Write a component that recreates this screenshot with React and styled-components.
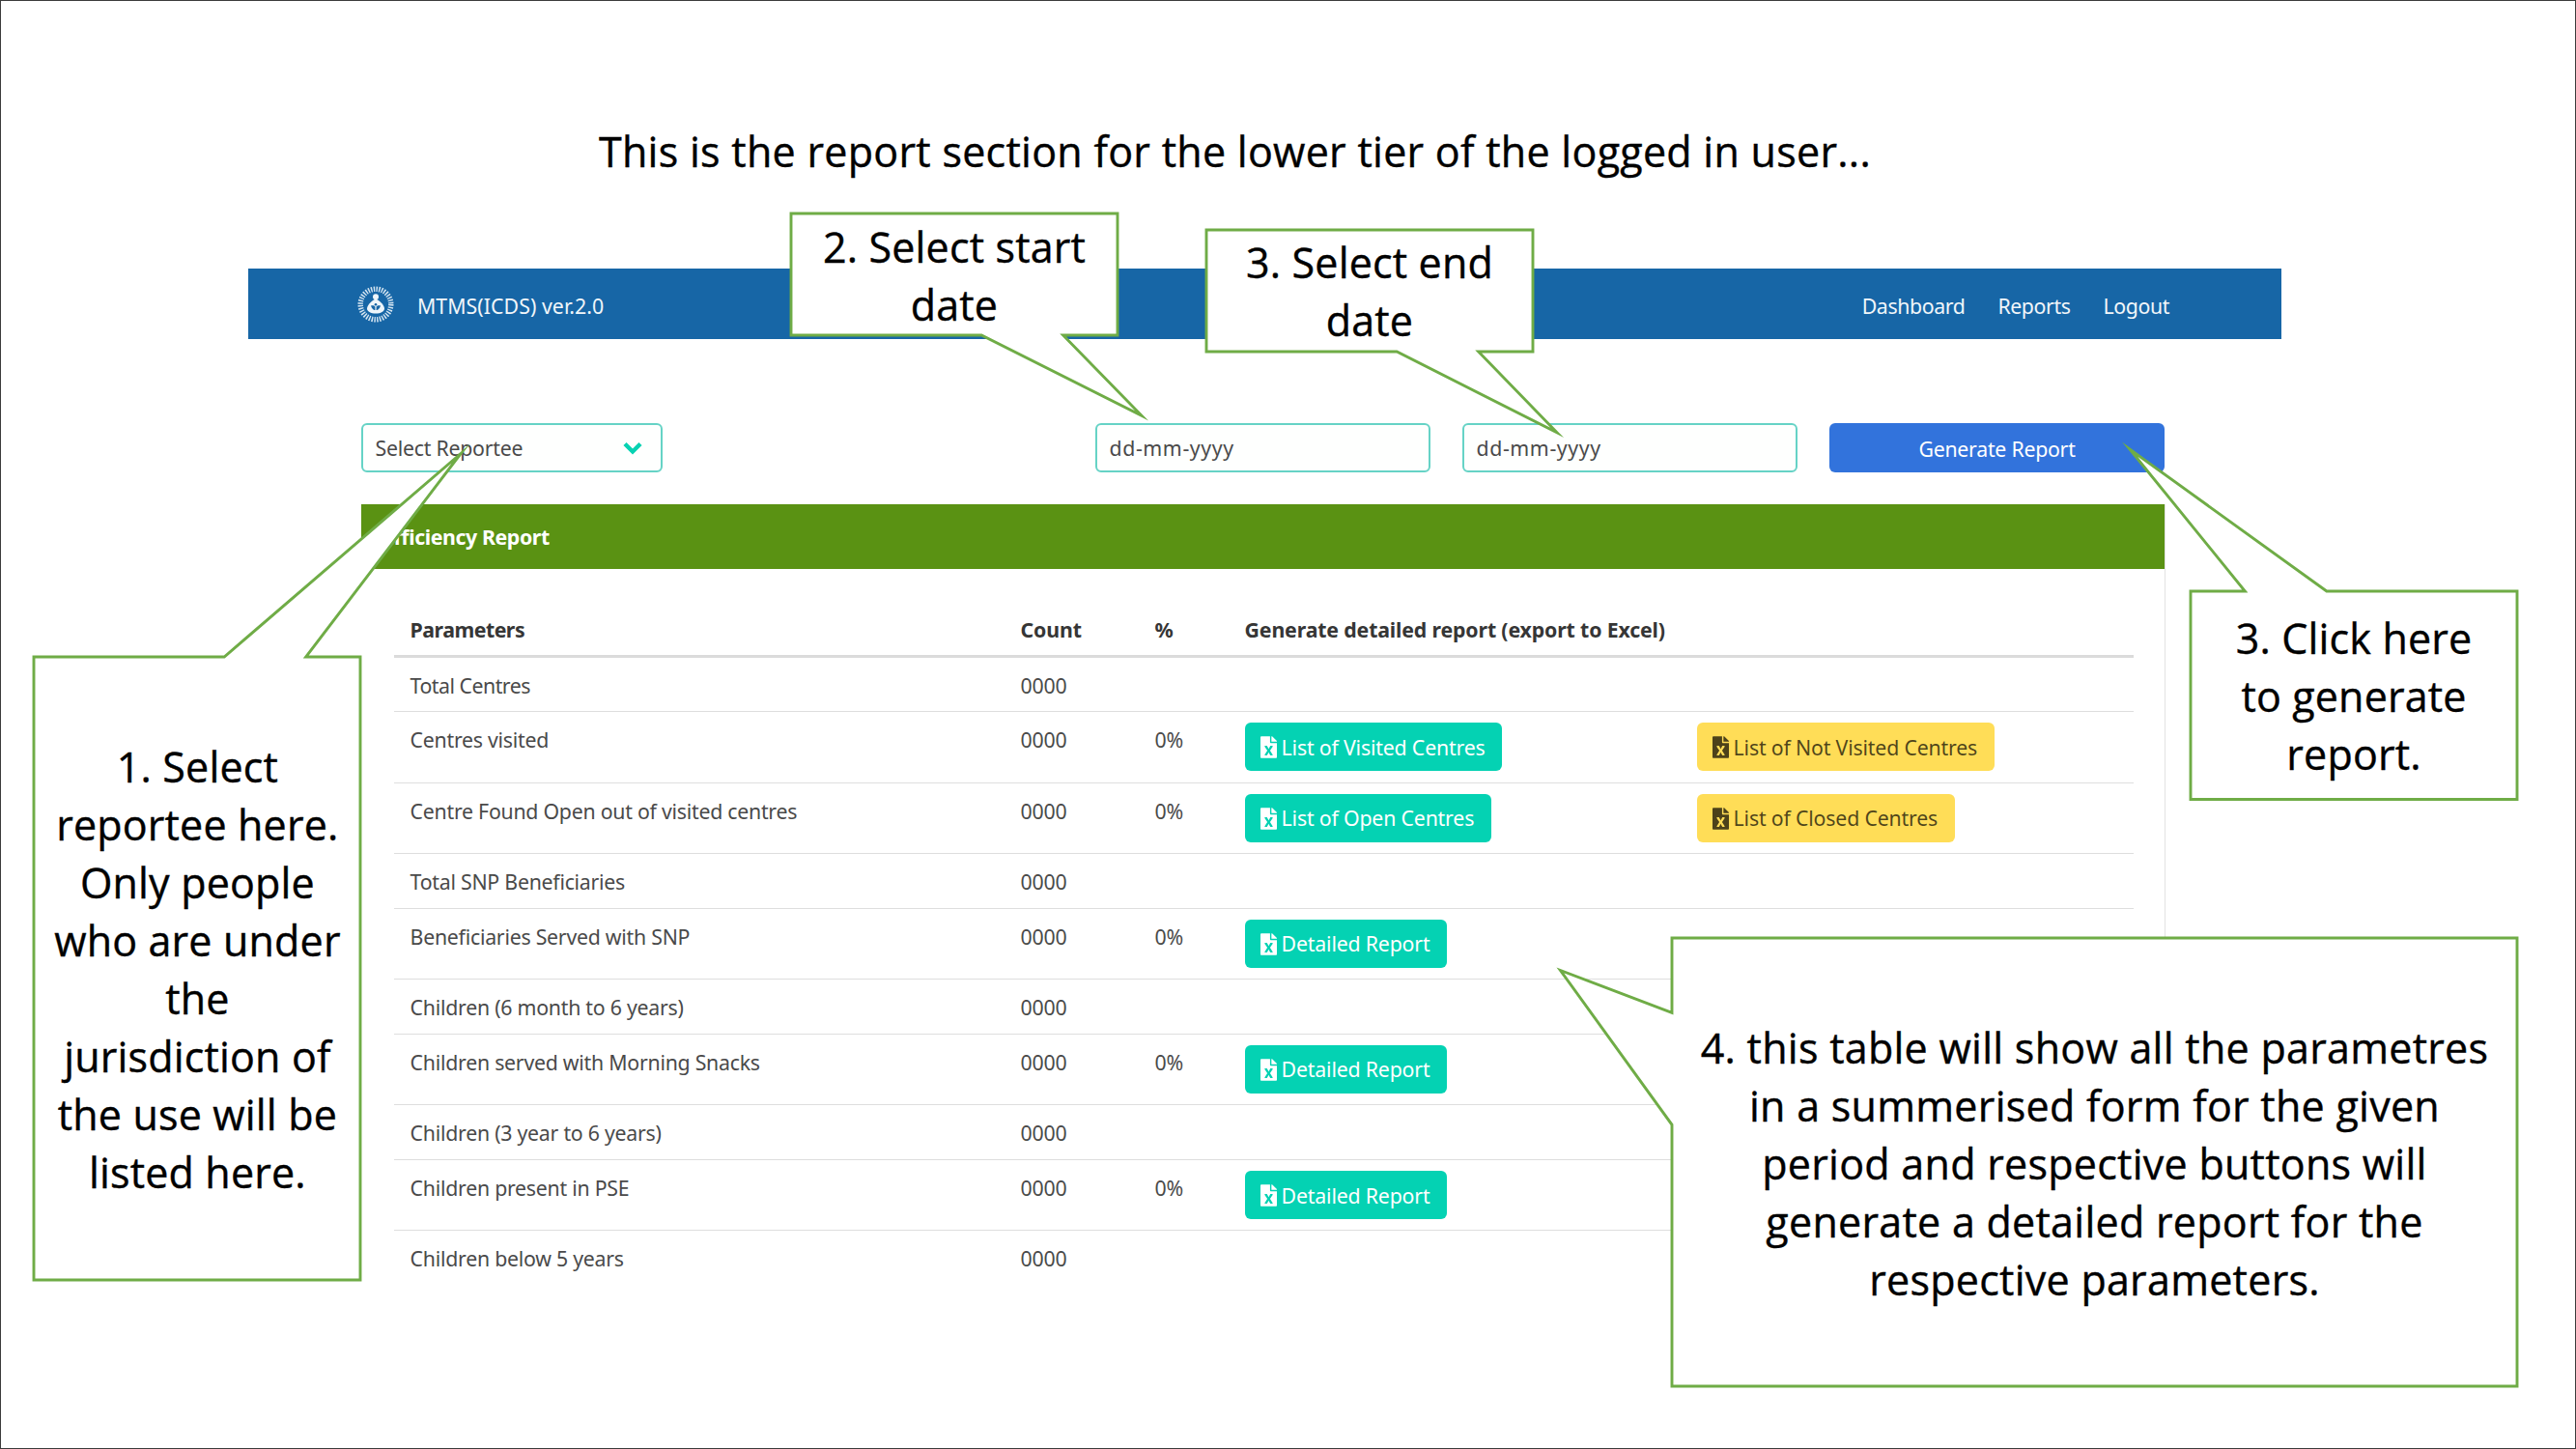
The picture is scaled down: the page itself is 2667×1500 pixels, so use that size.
import React from 'react';
import styled, { createGlobalStyle, css } from 'styled-components';
import { FaFileExcel } from 'react-icons/fa';

const GlobalStyle = createGlobalStyle`
  *, *::before, *::after { box-sizing: border-box; }
  body { margin: 0; background: #fff; }
`;

const Slide = styled.main`
  position: relative;
  display: flex;
  flex-direction: column;
  width: 2667px;
  height: 1500px;
  padding: 126px 304px 0 256px;
  overflow: hidden;
  background: #fff;
  border: 1px solid #3c3c3c;
`;

const Title = styled.h1`
  margin: 0;
  padding-left: 363px;
  font: 400 43px/60px "Open Sans", "Noto Sans", sans-serif;
  letter-spacing: 0.28px;
  white-space: nowrap;
  color: #000;
  -webkit-text-stroke: 0.4px #000;
`;

const Screen = styled.section`
  display: flex;
  flex-direction: column;
  margin-top: 91px;
  font: 400 21.3px/33.2px "Noto Sans", "Open Sans", sans-serif;
  letter-spacing: -0.25px;
  white-space: nowrap;
  color: #4a4a4a;
`;

const Navbar = styled.header`
  display: flex;
  align-items: center;
  justify-content: space-between;
  height: 73px;
  padding: 4px 116px 0 113px;
  background: #1766a6;
  color: #f1f6fa;
`;

const Brand = styled.div`
  display: flex;
  align-items: center;
  gap: 24px;
  letter-spacing: 0.05px;
`;

const Emblem = styled.svg`
  display: block;
  width: 38px;
  height: 38px;
  margin-top: -4px;
`;

const Menu = styled.nav`
  display: flex;
  gap: 34px;
  letter-spacing: -0.4px;
`;

const Content = styled.div`
  display: flex;
  flex-direction: column;
  gap: 33px;
  padding: 87px 121px 0 117px;
`;

const Filters = styled.div`
  display: flex;
  justify-content: space-between;
  height: 50.5px;
`;

const DateGroup = styled.div`
  display: grid;
  grid-template-columns: repeat(3, 347px);
  column-gap: 33px;
`;

const Field = styled.div`
  display: flex;
  align-items: center;
  justify-content: space-between;
  width: ${({ $width }) => $width || 'auto'};
  padding: 1px 19px 0 12.5px;
  background: #fefffe;
  border: 2px solid #66d3c6;
  border-radius: 6px;
  letter-spacing: ${({ $spaced }) => ($spaced ? '0.6px' : '-0.25px')};
`;

const Chevron = styled.svg`
  width: 20px;
  height: 14px;
  fill: none;
  stroke: #07d2b2;
  stroke-width: 4.4;
`;

const PrimaryButton = styled.button`
  padding: 2px 0 0;
  background: #3273dc;
  border: 0;
  border-radius: 6px;
  color: #fff;
  font: inherit;
  letter-spacing: inherit;
`;

const Card = styled.article`
  height: 802px;
  overflow: hidden;
  background: #fff;
  border-right: 1px solid #e2e2e2;
  margin-right: -1px;
`;

const CardHeader = styled.h2`
  display: flex;
  align-items: center;
  height: 67px;
  margin: 0;
  padding: 2px 22px 0;
  background: #5a9213;
  color: #fff;
  font-size: inherit;
  font-weight: 700;
  letter-spacing: -0.4px;
`;

const Table = styled.div`
  display: flex;
  flex-direction: column;
  padding: 34px 32px 0 34px;
`;

const Row = styled.div`
  display: grid;
  grid-template-columns: 632px 139px 93px 468px 1fr;
  flex: none;
  height: ${({ $tall }) => ($tall ? 73.35 : 56.7)}px;
  border-bottom: 1.6px solid #dedede;

  &:last-child { border-bottom-color: transparent; }

  ${({ $head }) => $head && css`
    height: 58px;
    border-bottom: 3px solid #dbdbdb;
    color: #363636;
    font-weight: 700;
    letter-spacing: -0.15px;
  `}
`;

const Cell = styled.div`
  padding: ${({ $action }) => ($action ? 11 : 12.2)}px 0 0 16.6px;
  letter-spacing: ${({ $tight }) => ($tight ? '-0.5px' : 'inherit')};
`;

const tones = {
  teal: css`background: #04d2b3; color: #fff;`,
  yellow: css`background: #ffdd57; color: rgba(0, 0, 0, 0.7);`,
};

const ExportButton = styled.button`
  display: flex;
  align-items: center;
  gap: 5px;
  height: 50px;
  padding: 1px 17.5px 0 16px;
  border: 0;
  border-radius: 6px;
  font: inherit;
  letter-spacing: -0.18px;
  ${({ $tone }) => tones[$tone]}

  svg { width: 17px; height: 23px; }
`;

const CalloutBox = styled.aside`
  position: absolute;
  left: ${({ $x }) => $x - 1}px;
  top: ${({ $y }) => $y - 1}px;
  display: flex;
  flex-direction: column;
  align-items: center;
  justify-content: center;
  width: ${({ $w }) => $w}px;
  height: ${({ $h }) => $h}px;
  padding-top: 3px;
  font: 400 43px/60px "Open Sans", "Noto Sans", sans-serif;
  letter-spacing: ${({ $w }) => ($w > 500 ? 0.27 : 0.17)}px;
  white-space: nowrap;
  color: #000;
  -webkit-text-stroke: 0.4px #000;
`;

const CalloutOutline = styled.svg`
  position: absolute;
  inset: 0;
  width: 100%;
  height: 100%;
  overflow: visible;
  fill: #fff;
  stroke: #6fac46;
  stroke-width: 2.9;
  stroke-miterlimit: 20;
`;

const CalloutLine = styled.span`
  position: relative;
`;

const rows = [
  { label: 'Total Centres', tight: true },
  { label: 'Centres visited' , percent: '0%', good: 'List of Visited Centres', warn: 'List of Not Visited Centres' },
  { label: 'Centre Found Open out of visited centres', percent: '0%', good: 'List of Open Centres', warn: 'List of Closed Centres' },
  { label: 'Total SNP Beneficiaries' },
  { label: 'Beneficiaries Served with SNP', percent: '0%', good: 'Detailed Report' },
  { label: 'Children (6 month to 6 years)' },
  { label: 'Children served with Morning Snacks', percent: '0%', good: 'Detailed Report' },
  { label: 'Children (3 year to 6 years)' },
  { label: 'Children present in PSE', percent: '0%', good: 'Detailed Report' },
  { label: 'Children below 5 years' },
];

/* Each callout: box origin and size, pointer tip, and the side its pointer leaves from. */
const callouts = [
  {
    x: 35.4, y: 680, w: 338, h: 645, tip: [477.5, 469.5], side: 'top', base: [7 / 12, 10 / 12],
    lines: ['1. Select', 'reportee here.', 'Only people', 'who are under', 'the', 'jurisdiction of', 'the use will be', 'listed here.'],
  },
  {
    x: 819, y: 221.3, w: 338, h: 126, tip: [1182, 430.5], side: 'bottom', base: [7 / 12, 10 / 12],
    lines: ['2. Select start', 'date'],
  },
  {
    x: 1249, y: 237.8, w: 338, h: 126, tip: [1612, 447.5], side: 'bottom', base: [7 / 12, 10 / 12],
    lines: ['3. Select end', 'date'],
  },
  {
    x: 2268, y: 612, w: 338, h: 215.5, tip: [2205, 465], side: 'top', base: [2 / 12, 5 / 12],
    lines: ['3. Click here', 'to generate', 'report.'],
  },
  {
    x: 1731, y: 971, w: 875, h: 464, tip: [1615.5, 1004.5], side: 'left', base: [2 / 12, 5 / 12],
    lines: [
      '4. this table will show all the parametres',
      'in a summerised form for the given',
      'period and respective buttons will',
      'generate a detailed report for the',
      'respective parameters.',
    ],
  },
];

function outline({ x, y, w, h, tip, side, base: [a, b] }) {
  const t = [tip[0] - x, tip[1] - y];
  const points = {
    top: [[0, 0], [w * a, 0], t, [w * b, 0], [w, 0], [w, h], [0, h]],
    bottom: [[0, 0], [w, 0], [w, h], [w * b, h], t, [w * a, h], [0, h]],
    left: [[0, 0], [w, 0], [w, h], [0, h], [0, h * b], t, [0, h * a]],
  }[side];
  return points.map((p) => p.join(',')).join(' ');
}

function Callout({ shape }) {
  return (
    <CalloutBox $x={shape.x} $y={shape.y} $w={shape.w} $h={shape.h}>
      <CalloutOutline><polygon points={outline(shape)} /></CalloutOutline>
      {shape.lines.map((line) => <CalloutLine key={line}>{line}</CalloutLine>)}
    </CalloutBox>
  );
}

function EmblemIcon() {
  return (
    <Emblem viewBox="0 0 38 38">
      <circle cx="19" cy="19" r="15.8" fill="none" stroke="#d3e4f1" strokeWidth="5.4" strokeDasharray="1.45 1.308" />
      <circle cx="19" cy="11.2" r="3" fill="#eef5fa" />
      <path d="M19 13.500c-3 1-8 5-9 9.500c-.4 3.500 4 5.500 9 5.500s9.400-2 9-5.500c-1-4.500-6-8.500-9-9.500z" fill="#eef5fa" />
      <path d="M14 20.500c2-.8 4 0 5 1.300c1-1.300 3-2.100 5-1.300c-.8 2.500-2.200 4-3.600 4.600h-2.800c-1.400-.6-2.800-2.100-3.600-4.600z" fill="#1766a6" />
      <circle cx="19" cy="19.200" r="1.300" fill="#1766a6" />
      <path d="M19 21v5" stroke="#eef5fa" strokeWidth="1.200" />
    </Emblem>
  );
}

export default function App() {
  return (
    <>
      <GlobalStyle />
      <Slide>
        <Title>This is the report section for the lower tier of the logged in user...</Title>
        <Screen>
          <Navbar>
            <Brand><EmblemIcon /><span>MTMS(ICDS) ver.2.0</span></Brand>
            <Menu><span>Dashboard</span><span>Reports</span><span>Logout</span></Menu>
          </Navbar>
          <Content>
            <Filters>
              <Field $width="312px">
                <span>Select Reportee</span>
                <Chevron viewBox="0 0 20 14"><path d="M2 2.500 10 10.500 18 2.500" /></Chevron>
              </Field>
              <DateGroup>
                <Field $spaced>dd-mm-yyyy</Field>
                <Field $spaced>dd-mm-yyyy</Field>
                <PrimaryButton>Generate Report</PrimaryButton>
              </DateGroup>
            </Filters>
            <Card>
              <CardHeader>Efficiency Report</CardHeader>
              <Table>
                <Row $head>
                  <Cell $tight>Parameters</Cell>
                  <Cell>Count</Cell>
                  <Cell>%</Cell>
                  <Cell>Generate detailed report (export to Excel)</Cell>
                </Row>
                {rows.map(({ label, tight, percent, good, warn }) => (
                  <Row key={label} $tall={Boolean(good)}>
                    <Cell $tight={tight}>{label}</Cell>
                    <Cell>0000</Cell>
                    <Cell>{percent}</Cell>
                    <Cell $action>{good && <ExportButton $tone="teal"><FaFileExcel />{good}</ExportButton>}</Cell>
                    <Cell $action>{warn && <ExportButton $tone="yellow"><FaFileExcel />{warn}</ExportButton>}</Cell>
                  </Row>
                ))}
              </Table>
            </Card>
          </Content>
        </Screen>
        {callouts.map((shape) => <Callout key={shape.lines[0]} shape={shape} />)}
      </Slide>
    </>
  );
}
